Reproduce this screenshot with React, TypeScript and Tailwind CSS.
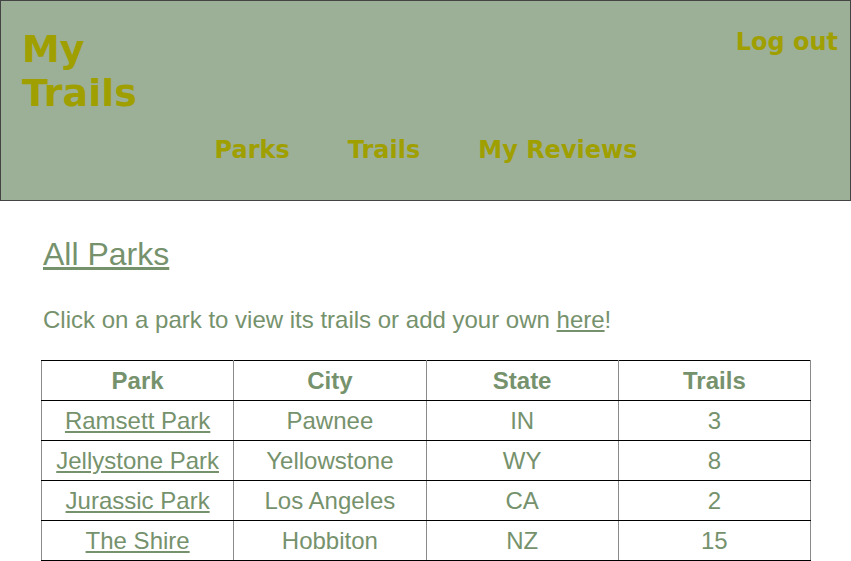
const parks = [
  { name: "Ramsett Park", city: "Pawnee", state: "IN", trails: 3 },
  { name: "Jellystone Park", city: "Yellowstone", state: "WY", trails: 8 },
  { name: "Jurassic Park", city: "Los Angeles", state: "CA", trails: 2 },
  { name: "The Shire", city: "Hobbiton", state: "NZ", trails: 15 },
];

const cell = "h-[40px] border-x border-x-[#8a8a8a] border-y border-y-black p-0 text-center align-middle";

export default function App() {
  return (
    <div className="min-h-screen bg-white font-['Liberation_Sans',Arial,sans-serif] text-[24px] text-[#76926d]">
      <header className="flex flex-col border border-[#444] bg-[#9caf97] pl-[21px] pr-[12px] pt-[26px] pb-[36px] font-['DejaVu_Sans',Verdana,sans-serif] font-bold text-[#a09f00]">
        <div className="flex items-start justify-between">
          <a href="#" className="w-[130px] text-[38px] leading-[44px]">My Trails</a>
          <a href="#" className="mt-px leading-[28px]">Log out</a>
        </div>
        <nav className="mt-[21px] flex justify-center gap-[58px] pr-[8px] leading-[28px]">
          <a href="#">Parks</a>
          <a href="#">Trails</a>
          <a href="#">My Reviews</a>
        </nav>
      </header>

      <main className="pl-[41px]">
        <h1 className="mt-[35px] pl-[2px] text-[32px] font-normal leading-[36px] underline">All Parks</h1>
        <p className="mt-[34px] pl-[2px] leading-[28px]">
          Click on a park to view its trails or add your own <a href="#" className="underline">here</a>!
        </p>

        <table className="mt-[26px] w-[770px] table-fixed border-collapse">
          <thead>
            <tr>
              <th className={`${cell} font-bold`}>Park</th>
              <th className={`${cell} font-bold`}>City</th>
              <th className={`${cell} font-bold`}>State</th>
              <th className={`${cell} font-bold`}>Trails</th>
            </tr>
          </thead>
          <tbody>
            {parks.map((p) => (
              <tr key={p.name}>
                <td className={cell}>
                  <a href="#" className="underline">{p.name}</a>
                </td>
                <td className={cell}>{p.city}</td>
                <td className={cell}>{p.state}</td>
                <td className={cell}>{p.trails}</td>
              </tr>
            ))}
          </tbody>
        </table>
      </main>
    </div>
  );
}
